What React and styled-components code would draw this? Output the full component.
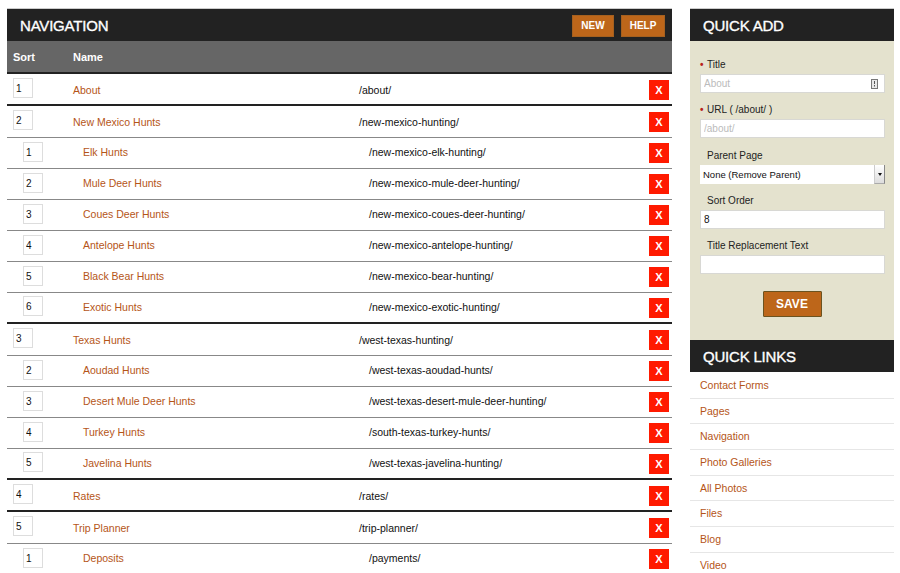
import React from "react";
import styled, { createGlobalStyle } from "styled-components";

const Global = createGlobalStyle`
  html, body { margin: 0; padding: 0; background: #fff; }
  body { font-family: "Liberation Sans", Arial, sans-serif; font-size: 11px; color: #111; }
  #root { height: 573px; overflow: hidden; }
`;

const Page = styled.div`
  display: flex;
  align-items: flex-start;
  gap: 18px;
  padding: 9px 6px 0 7px;
`;
const Main = styled.main`
  width: 665px;
  flex: none;
`;
const Side = styled.aside`
  width: 204px;
  flex: none;
`;
const TitleBar = styled.header`
  background: #222222;
  display: flex;
  align-items: center;
  justify-content: space-between;
  padding: ${(p) => (p.$side ? "1px 0 0 13px" : "1px 7px 0 13px")};
  border-top: ${(p) => (p.$flush ? "0" : "1px solid #ccc")};
  box-sizing: content-box;
  height: 31px;
  margin-top: ${(p) => (p.$flush ? "0" : "-1px")};
`;
const Title = styled.h2`
  margin: 0;
  font-size: 15px;
  font-weight: 400;
  color: #fff;
  letter-spacing: -0.2px;
  -webkit-text-stroke: 0.35px #fff;
`;
const Actions = styled.div`
  display: flex;
  gap: 7px;
`;
const TopButton = styled.button`
  width: 42px;
  height: 22px;
  padding: 0;
  border: 1px solid #a5601f;
  background: #bd661a;
  color: #fff;
  font: 700 10px "Liberation Sans", Arial, sans-serif;
  & + & { width: 44px; }
`;
const Columns = styled.div`
  height: 31px;
  background: #666666;
  border-bottom: 2px solid #222;
  display: grid;
  grid-template-columns: 60px 1fr;
  align-items: center;
  padding-left: 6px;
  color: #fff;
  font-weight: 700;
  font-size: 11px;
`;
const Row = styled.div`
  box-sizing: border-box;
  height: ${(p) => (p.$child ? "31px" : "32px")};
  border-bottom: ${(p) => (p.$thick ? "2px solid #222" : "1px solid #888")};
  display: grid;
  grid-template-columns: 60px 286px 1fr 20px;
  align-items: center;
  padding: ${(p) => (p.$thick && !p.$child ? "1px" : "0")} 3px 0 ${(p) => (p.$child ? "16px" : "6px")};
`;
const SortInput = styled.input`
  box-sizing: border-box;
  width: 20px;
  height: 20px;
  padding: 1px 0 0 2px;
  border: 1px solid #ddd;
  font: 10px "Liberation Sans", Arial, sans-serif;
  color: #111;
  margin-top: -3px;
`;
const PageLink = styled.a`
  color: #b55518;
  font-size: 10.5px;
  padding-bottom: ${(p) => p.$lift}px;
  text-decoration: none;
`;
const Url = styled.span`
  color: #111;
  font-size: 10.5px;
  padding-bottom: ${(p) => p.$lift}px;
`;
const Remove = styled.button`
  width: 20px;
  height: 20px;
  padding: 0;
  border: 0;
  background: #ff1a00;
  color: #fff;
  font: 700 11px "Liberation Sans", Arial, sans-serif;
`;
const Form = styled.form`
  background: #e4e2ce;
  height: 299px;
  padding: 9px 10px 0;
  box-sizing: border-box;
  display: flex;
  flex-direction: column;
`;
const Label = styled.label`
  display: block;
  font-size: 10px;
  line-height: 12px;
  margin: 0 0 3px 7px;
  padding-top: ${(p) => p.$gap}px;
  color: #222;
  position: relative;
`;
const Req = styled.span`
  position: absolute;
  left: -7px;
  color: #b8231a;
  font-weight: 700;
`;
const FieldWrap = styled.div`
  position: relative;
`;
const Field = styled.input`
  box-sizing: border-box;
  display: block;
  width: 185px;
  height: 19px;
  border: 1px solid #d8d8d4;
  padding: 0 3px;
  background: #fff;
  font: 10px "Liberation Sans", Arial, sans-serif;
  color: #111;
  &::placeholder { color: #bbb; }
`;
const KeyIcon = styled.svg`
  position: absolute;
  right: 6px;
  top: 5px;
`;
const SelectBox = styled.div`
  box-sizing: border-box;
  width: 185px;
  height: 19px;
  background: #fff;
  display: flex;
  align-items: center;
  justify-content: space-between;
  padding-left: 3px;
  font-size: 9.5px;
  color: #111;
`;
const SelectArrow = styled.span`
  width: 11px;
  height: 19px;
  background: linear-gradient(#fff, #ddd);
  border-left: 1px solid #ccc;
  border-right: 1px solid #888;
  border-bottom: 1px solid #aaa;
  box-sizing: border-box;
  display: flex;
  align-items: center;
  justify-content: center;
  &::after {
    content: "";
    border: 2px solid transparent;
    border-top: 3px solid #111;
    margin-top: 3px;
  }
`;
const Save = styled.button`
  align-self: center;
  margin-top: 17px;
  width: 59px;
  height: 26px;
  padding: 0;
  border: 1px solid #6b5320;
  border-radius: 1px;
  background: #bd661a;
  color: #fff;
  font: 700 12px "Liberation Sans", Arial, sans-serif;
`;
const LinkList = styled.nav`
  padding-top: 1px;
`;
const LinkItem = styled.a`
  display: block;
  box-sizing: border-box;
  height: 25.7px;
  line-height: 25px;
  padding-left: 10px;
  border-bottom: 1px solid #e6e6e6;
  color: #b55518;
  font-size: 10.5px;
  text-decoration: none;
  &:last-child { border-bottom: 0; }
`;

const rows = [
  ["1", "About", "/about/", 0, 1],
  ["2", "New Mexico Hunts", "/new-mexico-hunting/", 0, 0],
  ["1", "Elk Hunts", "/new-mexico-elk-hunting/", 1, 0],
  ["2", "Mule Deer Hunts", "/new-mexico-mule-deer-hunting/", 1, 0],
  ["3", "Coues Deer Hunts", "/new-mexico-coues-deer-hunting/", 1, 0],
  ["4", "Antelope Hunts", "/new-mexico-antelope-hunting/", 1, 0],
  ["5", "Black Bear Hunts", "/new-mexico-bear-hunting/", 1, 0],
  ["6", "Exotic Hunts", "/new-mexico-exotic-hunting/", 1, 1],
  ["3", "Texas Hunts", "/west-texas-hunting/", 0, 0],
  ["2", "Aoudad Hunts", "/west-texas-aoudad-hunts/", 1, 0],
  ["3", "Desert Mule Deer Hunts", "/west-texas-desert-mule-deer-hunting/", 1, 0],
  ["4", "Turkey Hunts", "/south-texas-turkey-hunts/", 1, 0],
  ["5", "Javelina Hunts", "/west-texas-javelina-hunting/", 1, 1],
  ["4", "Rates", "/rates/", 0, 1],
  ["5", "Trip Planner", "/trip-planner/", 0, 0],
  ["1", "Deposits", "/payments/", 1, 0],
];
const links = ["Contact Forms", "Pages", "Navigation", "Photo Galleries", "All Photos", "Files", "Blog", "Video"];

const liftOf = (child, thick) => (child ? (thick ? 1 : 2) : 0);

export default function App() {
  return (
    <Page>
      <Global />
      <Main>
        <TitleBar>
          <Title>NAVIGATION</Title>
          <Actions>
            <TopButton>NEW</TopButton>
            <TopButton>HELP</TopButton>
          </Actions>
        </TitleBar>
        <Columns>
          <span>Sort</span>
          <span>Name</span>
        </Columns>
        {rows.map(([n, name, url, child, thick], i) => (
          <Row key={i} $child={!!child} $thick={!!thick}>
            <SortInput defaultValue={n} />
            <PageLink href="#" $lift={liftOf(child, thick)}>{name}</PageLink>
            <Url $lift={liftOf(child, thick)}>{url}</Url>
            <Remove>X</Remove>
          </Row>
        ))}
      </Main>
      <Side>
        <TitleBar $side>
          <Title>QUICK ADD</Title>
        </TitleBar>
        <Form>
          <Label $gap={9}><Req>•</Req>Title</Label>
          <FieldWrap>
            <Field placeholder="About" />
            <KeyIcon width="7" height="10" viewBox="0 0 7 10">
              <rect x="0.5" y="0.5" width="6" height="9" fill="#e8e8e8" stroke="#777" />
              <rect x="3" y="2" width="1" height="3" fill="#555" />
              <rect x="3" y="6" width="1" height="1.5" fill="#555" />
            </KeyIcon>
          </FieldWrap>
          <Label $gap={11}><Req>•</Req>URL ( /about/ )</Label>
          <Field placeholder="/about/" />
          <Label $gap={12}>Parent Page</Label>
          <SelectBox>
            None (Remove Parent)
            <SelectArrow />
          </SelectBox>
          <Label $gap={11}>Sort Order</Label>
          <Field defaultValue="8" />
          <Label $gap={11}>Title Replacement Text</Label>
          <Field />
          <Save type="button">SAVE</Save>
        </Form>
        <TitleBar $side $flush>
          <Title>QUICK LINKS</Title>
        </TitleBar>
        <LinkList>
          {links.map((l) => (
            <LinkItem key={l} href="#">{l}</LinkItem>
          ))}
        </LinkList>
      </Side>
    </Page>
  );
}
